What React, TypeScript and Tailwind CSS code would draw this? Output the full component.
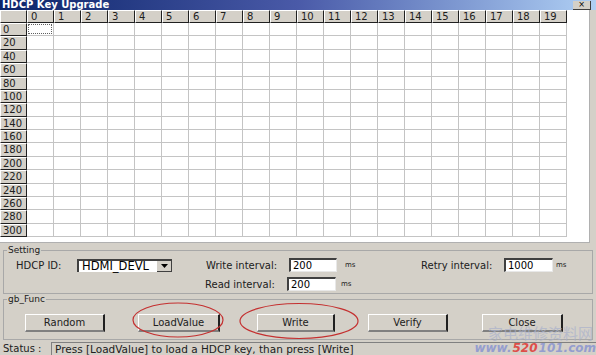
import React from "react";

const cols = Array.from({ length: 20 }, (_, i) => i);
const rows = Array.from({ length: 16 }, (_, i) => i * 20);

function Btn({ label, w, ml }: { label: string; w: string; ml: string }) {
  return (
    <div
      className={`${w} ${ml} h-[18px] flex items-center justify-center bg-[#d4d0c8] border-t border-l border-t-white border-l-white border-r-2 border-b-2 border-r-[#202020] border-b-[#808080] text-[10px] leading-[11px] text-[#202020]`}
    >
      {label}
    </div>
  );
}

function NumBox({ value, w }: { value: string; w: string }) {
  return (
    <div
      className={`${w} h-[14px] bg-white border-t-2 border-l-2 border-t-[#404040] border-l-[#404040] border-r border-b border-r-[#e8e8e8] border-b-[#e8e8e8] pl-[2px] text-[10px] leading-[11px] text-black`}
    >
      {value}
    </div>
  );
}

export default function App() {
  return (
    <div className="relative w-[596px] h-[355px] overflow-hidden bg-[#d4d0c8] font-['DejaVu_Sans',sans-serif] text-[#202020]">
      {/* Title bar */}
      <div className="h-[10px] flex items-center justify-between bg-linear-to-r from-[#0a246a] via-[#4a5aa8] to-[#b0d0f4]">
        <span className="pl-[2px] text-[10px] font-bold leading-[10px] text-white">
          HDCP Key Upgrade
        </span>
        <div className="mr-[5px] w-[18px] h-[9px] bg-[#d4d0c8] border-b border-r border-[#404040] flex items-center justify-center text-[8px] leading-[8px] text-black">
          ×
        </div>
      </div>

      {/* Grid */}
      <div className="w-[590px] h-[233px] bg-white border-r border-b border-[#b0b0b0]">
        <div className="flex h-[13px]">
          <div className="w-[27px] h-full bg-[#d4d0c8] border-t border-l border-white border-r border-b border-r-[#202020] border-b-[#202020]" />
          {cols.map((c) => (
            <div
              key={c}
              className="w-[27px] h-full bg-[#d4d0c8] border-t border-l border-t-white border-l-white border-r border-b border-r-[#202020] border-b-[#202020] pl-[3px] text-[10px] leading-[11px]"
            >
              {c}
            </div>
          ))}
        </div>
        {rows.map((r, ri) => (
          <div key={r} className="flex h-[13.375px]">
            <div className="w-[27px] h-full bg-[#d4d0c8] border-t border-l border-t-white border-l-white border-r border-b border-r-[#202020] border-b-[#202020] pl-[2px] text-[10px] leading-[11px]">
              {r}
            </div>
            {cols.map((c) => (
              <div
                key={c}
                className="w-[27px] h-full border-r border-b border-[#c4c4c4] flex"
              >
                {ri === 0 && c === 0 && (
                  <div className="m-[1px] flex-1 border border-dotted border-[#606060]" />
                )}
              </div>
            ))}
          </div>
        ))}
      </div>

      {/* Setting */}
      <fieldset className="mt-[2px] mx-[3px] h-[49px] border border-[#a8a8a8]">
        <legend className="ml-[3px] px-[1px] text-[9px] leading-[10px]">Setting</legend>
        <div className="pt-[3px] flex flex-col gap-[5px] text-[10px]">
          <div className="flex items-center h-[14px]">
            <span className="ml-[12px] w-[61px]">HDCP ID:</span>
            <div className="w-[95px] h-[13px] bg-white border-t-2 border-l-2 border-t-[#404040] border-l-[#404040] flex items-center">
              <span className="flex-1 pl-[3px] text-[11.5px] leading-[11px] text-black">HDMI_DEVL</span>
              <div className="w-[15px] h-full bg-[#d4d0c8] border-r border-b border-[#404040] flex items-center justify-center">
                <svg width="7" height="4" viewBox="0 0 7 4">
                  <path d="M0 0 H7 L3.5 4 Z" fill="#000" />
                </svg>
              </div>
            </div>
            <span className="ml-[34px] w-[83px]">Write interval:</span>
            <NumBox value="200" w="w-[48px]" />
            <span className="ml-[8px] w-[76px] text-[7px]">ms</span>
            <span className="w-[83px]">Retry interval:</span>
            <NumBox value="1000" w="w-[49px]" />
            <span className="ml-[3px] text-[7px]">ms</span>
          </div>
          <div className="flex items-center h-[14px]">
            <span className="ml-[201px] w-[82px]">Read interval:</span>
            <NumBox value="200" w="w-[49px]" />
            <span className="ml-[5px] text-[7px]">ms</span>
          </div>
        </div>
      </fieldset>

      {/* gb_Func */}
      <fieldset className="mx-[3px] h-[46px] border border-[#a8a8a8]">
        <legend className="ml-[3px] px-[1px] text-[9px] leading-[10px]">gb_Func</legend>
        <div className="pt-[10px] flex items-center">
          <Btn label="Random" w="w-[80px]" ml="ml-[21px]" />
          <Btn label="LoadValue" w="w-[82px]" ml="ml-[33px]" />
          <Btn label="Write" w="w-[78px]" ml="ml-[37px]" />
          <Btn label="Verify" w="w-[80px]" ml="ml-[33px]" />
          <Btn label="Close" w="w-[81px]" ml="ml-[34px]" />
        </div>
      </fieldset>

      {/* Status bar */}
      <div className="h-[15px] flex items-end text-[10px]">
        <span className="pl-[3px] w-[51px] leading-[12px]">Status :</span>
        <div className="flex-1 h-[13px] border-t border-l border-[#808080] pl-[3px] leading-[12px] text-[10.5px]">
          Press [LoadValue] to load a HDCP key, than press [Write]
        </div>
      </div>

      {/* Red marker ellipses */}
      <svg className="absolute left-0 top-0 pointer-events-none" width="596" height="355">
        <ellipse cx="178" cy="320" rx="45" ry="17" fill="none" stroke="#c43030" strokeWidth="1.2" />
        <ellipse cx="299" cy="321" rx="59" ry="17.5" fill="none" stroke="#c43030" strokeWidth="1.2" />
      </svg>

      {/* Watermark */}
      <div className="absolute right-[3px] top-[325px] text-[15px] leading-[15px] text-[#aab2cc] opacity-70 font-['Noto_Sans_CJK_SC',serif]">
        家电维修资料网
      </div>
      <div className="absolute right-0 top-[342px] text-[12px] leading-[13px] font-bold italic text-[#8e98d0] font-['DejaVu_Sans',sans-serif] opacity-90">
        www.<span className="mx-[1px] text-[#e0403c]">520</span>101.com
      </div>
    </div>
  );
}
